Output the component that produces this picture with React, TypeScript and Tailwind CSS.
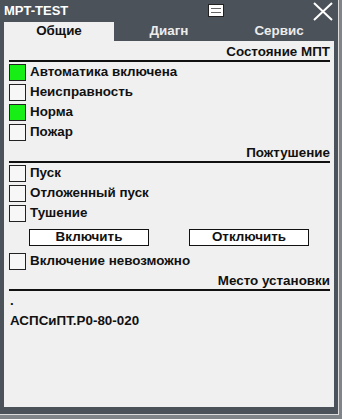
import { ReactNode } from 'react'

const FONT = "font-['Liberation_Sans',Arial,sans-serif]"

function SectionHeader({ title }: { title: string }) {
  return (
    <div className="pt-[3px]">
      <div className="h-[16px] text-right text-[13.4px] font-bold leading-[16px] text-[#111]">{title}</div>
      <div className="h-[2px] bg-[#111]" />
    </div>
  )
}

function Indicator({ label, on = false }: { label: string; on?: boolean }) {
  return (
    <div className="flex h-[20px] items-center gap-[4px]">
      <div
        className={`h-[17px] w-[17px] shrink-0 border border-[#222] ${on ? 'bg-[#16ee16]' : 'bg-[#f7f7f7]'}`}
      />
      <span className="text-[13.4px] font-bold leading-none text-[#111]">{label}</span>
    </div>
  )
}

function Tab({ children, active = false }: { children: ReactNode; active?: boolean }) {
  return (
    <div
      className={`flex h-[19px] flex-1 items-center justify-center text-[13.4px] font-bold ${
        active ? 'bg-[#f0f0f0] text-[#111]' : 'text-[#ececec]'
      }`}
    >
      {children}
    </div>
  )
}

export default function App() {
  return (
    <div className={`h-[419px] w-[342px] bg-[#80858a] ${FONT}`}>
      <div className="flex h-[415px] w-[339px] flex-col border-b border-r border-[#dcdcdc] bg-[#4b525a] px-[4px]">
        {/* title bar */}
        <div className="relative flex h-[22px] items-center">
          <span className="text-[13px] font-bold text-white">MPT-TEST</span>
          <div className="absolute left-[204px] top-[4px] flex h-[13px] w-[16px] flex-col gap-[3px] border border-[#222] bg-white px-[2px] pt-[3px]">
            <div className="h-[1px] w-[10px] bg-[#666]" />
            <div className="h-[1px] w-[10px] bg-[#666]" />
          </div>
          <svg className="absolute left-[309px] top-[2px]" width="20" height="19" viewBox="0 0 20 19">
            <path d="M1 1 L19 18 M19 1 L1 18" stroke="white" strokeWidth="2" fill="none" />
          </svg>
        </div>

        {/* tabs */}
        <div className="flex">
          <Tab active>Общие</Tab>
          <Tab>Диагн</Tab>
          <Tab>Сервис</Tab>
        </div>

        {/* content */}
        <div className="mb-[7px] flex-1 bg-[#f0f0f0] pl-[5px] pr-[4px]">
          <SectionHeader title="Состояние МПТ" />
          <Indicator label="Автоматика включена" on />
          <Indicator label="Неисправность" />
          <Indicator label="Норма" on />
          <Indicator label="Пожар" />

          <SectionHeader title="Пожтушение" />
          <Indicator label="Пуск" />
          <Indicator label="Отложенный пуск" />
          <Indicator label="Тушение" />
          <div className="flex h-[28px] items-center gap-[40px] pl-[20px]">
            <button className="h-[17px] w-[120px] border border-[#111] bg-white text-[13.4px] font-bold leading-none text-[#111]">
              Включить
            </button>
            <button className="h-[17px] w-[120px] border border-[#111] bg-white text-[13.4px] font-bold leading-none text-[#111]">
              Отключить
            </button>
          </div>
          <Indicator label="Включение невозможно" />

          <div className="-mt-[1px]">
            <SectionHeader title="Место установки" />
          </div>
          <div className="flex h-[20px] items-center pl-[1px] text-[13.4px] font-bold text-[#111]">.</div>
          <div className="flex h-[21px] items-center pl-[1px] text-[13.4px] font-bold text-[#111]">АСПСиПТ.Р0-80-020</div>
        </div>
      </div>
    </div>
  )
}
